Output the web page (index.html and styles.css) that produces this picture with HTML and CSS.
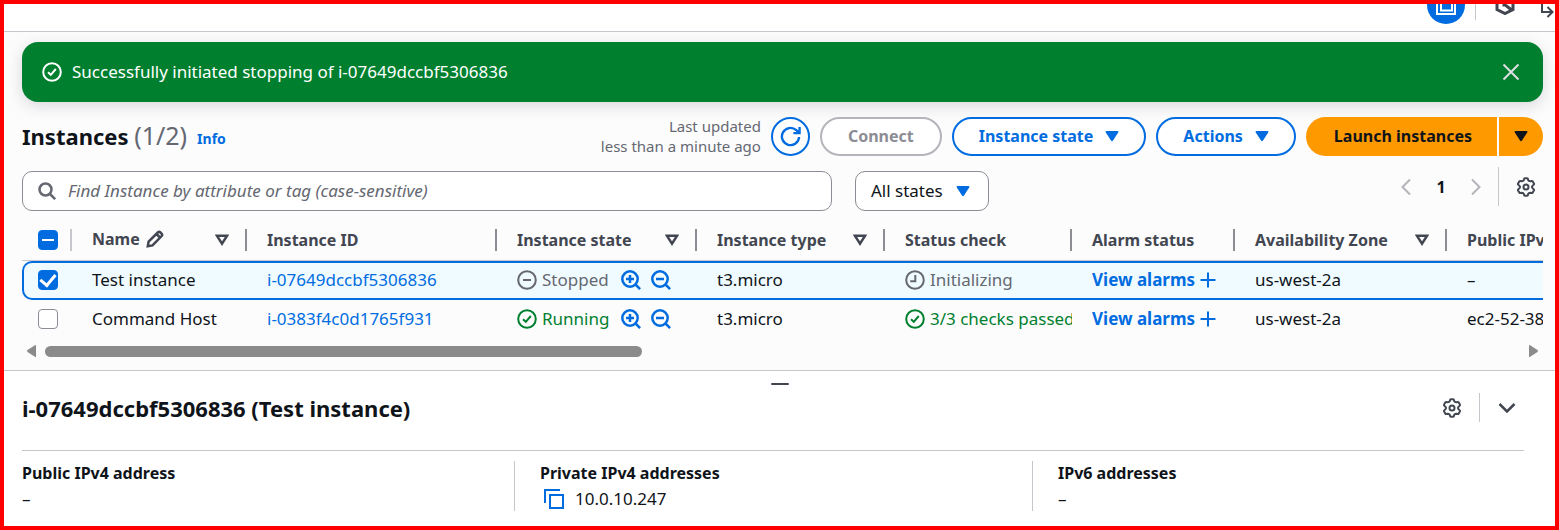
FILE: index.html
```html
<!DOCTYPE html>
<html lang="en">
<head>
<meta charset="utf-8">
<title>Instances</title>
<link rel="stylesheet" href="styles.css">
</head>
<body>
<svg class="sprite" aria-hidden="true">
  <symbol id="ok" viewBox="0 0 20 20"><circle cx="10" cy="10" r="8.8"/><path d="M6 10.200l2.800 2.600 5-5.800"/></symbol>
  <symbol id="stopped" viewBox="0 0 20 20"><circle cx="10" cy="10" r="8.8"/><path d="M6 10h8"/></symbol>
  <symbol id="pending" viewBox="0 0 20 20"><circle cx="10" cy="10" r="8.8"/><path d="M10.3 5v6.2H5.2"/></symbol>
  <symbol id="zoom-in" viewBox="0 0 20 20"><circle cx="9" cy="9" r="7.7"/><path d="M14.5 14.5l4.6 4.6M5 9h8M9 5v8"/></symbol>
  <symbol id="zoom-out" viewBox="0 0 20 20"><circle cx="9" cy="9" r="7.7"/><path d="M14.5 14.5l4.6 4.6M5 9h8"/></symbol>
  <symbol id="plus" viewBox="0 0 16 16"><path d="M8 .5v15M.5 8h15"/></symbol>
  <symbol id="caret" viewBox="0 0 14 12"><path class="solid" d="M1.6 1h10.8a1 1 0 0 1 .8 1.5L8 10.6q-1 1.4-2 0L.8 2.500A1 1 0 0 1 1.600 1z"/></symbol>
  <symbol id="sort" viewBox="0 0 14 12"><path d="M2 1.800h10L7 9.600z"/></symbol>
  <symbol id="gear" viewBox="0 0 20 20"><path d="M8 2.300Q8 1.200 9 1.200h2q1 0 1 1.100.3 1.900 2.300 1.900 1.800-.6 2.300.2l1.300 2q.5.900-.5 1.600-1.500 1.200-1.500 2t1.500 2q1 .7.500 1.600l-1.300 2q-.5.800-2.300.2-2 0-2.300 1.900 0 1.100-1 1.100H9q-1 0-1-1.100-.3-1.900-2.300-1.900-1.800.6-2.300-.2l-1.300-2q-.5-.9.500-1.600 1.500-1.200 1.500-2t-1.500-2q-1-.7-.5-1.600l1.300-2q.5-.8 2.300-.2 2 0 2.300-1.900z"/><circle cx="10" cy="10" r="2.500"/></symbol>
  <symbol id="left" viewBox="0 0 12 18"><path d="M10 1.500L2.500 9l7.500 7.500"/></symbol>
  <symbol id="right" viewBox="0 0 12 18"><path d="M2 1.500L9.500 9 2 16.500"/></symbol>
</svg>
<div class="frame">
  <header class="topbar">
    <button class="round-tool" aria-label="Tools"><svg viewBox="0 0 38 38"><path d="M10 8h18v20H10z"/><path d="M14 8h11v16.500H14z"/></svg></button>
    <span class="topbar-line"></span>
    <button class="tool hex" aria-label="Services"><svg viewBox="0 0 20 20"><path d="M2 5.500L10 1.500l8 4v9l-8 4-8-4zM9 9l7 5.500M9 11.500V8"/></svg></button>
    <button class="tool arrow" aria-label="Open panel"><svg viewBox="0 0 16 16"><path d="M3 0v9h10M8.500 4l5 5-5 5"/></svg></button>
  </header>

  <main class="main">
    <div class="flash" role="status">
      <svg class="icon20"><use href="#ok"/></svg>
      <p class="flash-text">Successfully initiated stopping of i-07649dccbf5306836</p>
      <button class="close" aria-label="Dismiss"><svg viewBox="0 0 18 18"><path d="M1.500 1.500l15 15M16.500 1.500l-15 15"/></svg></button>
    </div>

    <div class="heading-row">
      <h1 class="title">Instances <span class="count">(1/2)</span></h1>
      <a class="info" href="#">Info</a>
      <p class="updated">Last updated<br>less than a minute ago</p>
      <button class="btn refresh" aria-label="Refresh"><svg viewBox="0 0 22 22"><path d="M20 11.500a9 9 0 1 1-3-7.200l3 2.700M20.500 1v6.500H14"/></svg></button>
      <button class="btn connect" disabled>Connect</button>
      <button class="btn">Instance state <svg class="caret"><use href="#caret"/></svg></button>
      <button class="btn">Actions <svg class="caret"><use href="#caret"/></svg></button>
      <div class="split">
        <button class="primary launch">Launch instances</button>
        <button class="primary more" aria-label="More launch options"><svg class="caret"><use href="#caret"/></svg></button>
      </div>
    </div>

    <div class="filter-row">
      <label class="search">
        <svg viewBox="0 0 18 18"><circle cx="7.500" cy="7.500" r="6"/><path d="M12 12l5.200 5.200"/></svg>
        <input type="text" aria-label="Find Instance" placeholder="Find Instance by attribute or tag (case-sensitive)">
      </label>
      <label class="states">
        <select aria-label="Instance states"><option>All states</option></select>
        <svg class="caret"><use href="#caret"/></svg>
      </label>
      <nav class="pager" aria-label="Pages">
        <button class="page-arrow" aria-label="Previous page"><svg><use href="#left"/></svg></button>
        <button class="page">1</button>
        <button class="page-arrow" aria-label="Next page"><svg><use href="#right"/></svg></button>
        <button class="settings" aria-label="Preferences"><svg class="icon20"><use href="#gear"/></svg></button>
      </nav>
    </div>

    <div class="table-wrap">
      <table class="grid">
        <colgroup><col class="c-pick"><col class="c-name"><col class="c-id"><col class="c-state"><col class="c-type"><col class="c-check"><col class="c-alarm"><col class="c-zone"><col class="c-dns"></colgroup>
        <thead>
          <tr>
            <th class="pick"><div class="th pick-head"><input class="tick partial" type="checkbox" aria-label="Select all"></div></th>
            <th><div class="th"><span class="name-label">Name <svg class="pencil" viewBox="0 0 18 18"><path d="M1.800 16.200l.8-4.700L12 2.300q1.200-1 2.500.2l1 1q1.200 1.300.2 2.500L6.500 15.400zM10.500 4l3.500 3.500"/></svg></span><svg class="sort"><use href="#sort"/></svg></div></th>
            <th><div class="th">Instance ID</div></th>
            <th><div class="th">Instance state<svg class="sort"><use href="#sort"/></svg></div></th>
            <th><div class="th">Instance type<svg class="sort"><use href="#sort"/></svg></div></th>
            <th><div class="th">Status check</div></th>
            <th><div class="th">Alarm status</div></th>
            <th><div class="th">Availability Zone<svg class="sort"><use href="#sort"/></svg></div></th>
            <th><div class="th last">Public IPv</div></th>
          </tr>
        </thead>
        <tbody>
          <tr class="selected">
            <td class="pick"><input class="tick" type="checkbox" checked aria-label="Test instance"></td>
            <td>Test instance</td>
            <td><a href="#">i-07649dccbf5306836</a></td>
            <td><div class="cell"><span class="status muted"><svg class="icon20"><use href="#stopped"/></svg>Stopped</span><button class="zoom" aria-label="Include state"><svg class="icon20"><use href="#zoom-in"/></svg></button><button class="zoom" aria-label="Exclude state"><svg class="icon20"><use href="#zoom-out"/></svg></button></div></td>
            <td>t3.micro</td>
            <td><div class="cell"><span class="status muted"><svg class="icon20"><use href="#pending"/></svg>Initializing</span></div></td>
            <td><div class="cell alarm"><a href="#">View alarms</a><button class="zoom" aria-label="Add alarm"><svg class="plus"><use href="#plus"/></svg></button></div></td>
            <td>us-west-2a</td>
            <td>–</td>
          </tr>
          <tr>
            <td class="pick"><input class="tick" type="checkbox" aria-label="Command Host"></td>
            <td>Command Host</td>
            <td><a href="#">i-0383f4c0d1765f931</a></td>
            <td><div class="cell"><span class="status good"><svg class="icon20"><use href="#ok"/></svg>Running</span><button class="zoom" aria-label="Include state"><svg class="icon20"><use href="#zoom-in"/></svg></button><button class="zoom" aria-label="Exclude state"><svg class="icon20"><use href="#zoom-out"/></svg></button></div></td>
            <td>t3.micro</td>
            <td><div class="cell"><span class="status good"><svg class="icon20"><use href="#ok"/></svg>3/3 checks passed</span></div></td>
            <td><div class="cell alarm"><a href="#">View alarms</a><button class="zoom" aria-label="Add alarm"><svg class="plus"><use href="#plus"/></svg></button></div></td>
            <td>us-west-2a</td>
            <td>ec2-52-38</td>
          </tr>
        </tbody>
      </table>
    </div>
    <div class="scroller">
      <button class="scroll-end" aria-label="Scroll left"><svg viewBox="0 0 10 12"><path d="M9 0v12Q8 12 7.500 11.500L.5 7Q-.3 6 .5 5L7.500.5Q8 0 9 0z"/></svg></button>
      <div class="track"><div class="thumb"></div></div>
      <button class="scroll-end" aria-label="Scroll right"><svg viewBox="0 0 10 12"><path d="M1 0v12Q2 12 2.500 11.500L9.500 7Q10.300 6 9.500 5L2.500.5Q2 0 1 0z"/></svg></button>
    </div>
  </main>

  <section class="panel">
    <div class="grip"></div>
    <div class="panel-body">
      <div class="panel-head">
        <h2 class="panel-title">i-07649dccbf5306836 (Test instance)</h2>
        <button class="plain" aria-label="Panel preferences"><svg class="icon20"><use href="#gear"/></svg></button>
        <button class="plain fold" aria-label="Collapse panel"><svg viewBox="0 0 18 12"><path d="M1.500 2L9 9.500 16.500 2"/></svg></button>
      </div>
      <dl class="facts">
        <div class="fact"><dt>Public IPv4 address</dt><dd>–</dd></div>
        <div class="fact"><dt>Private IPv4 addresses</dt><dd class="copyable"><button class="copy" aria-label="Copy address"><svg viewBox="0 0 20 20"><path d="M1 14V1h15M6 6h13v13H6z"/></svg></button>10.0.10.247</dd></div>
        <div class="fact"><dt>IPv6 addresses</dt><dd>–</dd></div>
      </dl>
    </div>
  </section>
</div>
</body>
</html>
```
FILE: styles.css
```css
* { box-sizing: border-box; }
body { margin: 0; font-family: "Noto Sans", "Open Sans", sans-serif; font-size: 17px; line-height: 24px; color: #0f141a; }
h1, h2, p, dl, dd { margin: 0; }
button, input, select { font: inherit; color: inherit; }
button { padding: 0; border: 0; background: none; flex: none; display: inline-flex; align-items: center; justify-content: center; }
a { color: #006ce0; text-decoration: none; }
svg { fill: none; stroke: currentColor; stroke-width: 2; display: block; flex: none; }
.solid { fill: currentColor; stroke: none; }
.sprite { display: none; }
.icon20 { width: 20px; height: 20px; }
.caret, .sort { width: 14px; height: 12px; }

.frame { min-height: 100vh; border: 4px solid #f00; background: #fcfcfd; display: flex; flex-direction: column; overflow: hidden; }

.topbar { height: 28px; background: #fff; border-bottom: 1px solid #c6c6cd; display: flex; justify-content: flex-end; align-items: flex-end; overflow: hidden; color: #424650; }
.round-tool { width: 38px; height: 38px; border-radius: 50%; background: #006ce0; color: #fff; margin-bottom: 7px; }
.round-tool svg { width: 38px; height: 38px; margin-top: -20px; }
.round-tool { align-items: flex-start; }
.round-tool svg { margin-top: 0; }
.topbar-line { width: 1px; height: 20px; background: #c6c6cd; margin: 0 19px 11px 10px; }
.tool svg { width: 20px; height: 20px; stroke-width: 3; }
.hex { margin-bottom: 16px; }
.arrow { margin: 0 0 12px 24px; }
.tool.arrow svg { width: 16px; height: 16px; stroke-width: 2; }

.main { padding: 10px 12px 13px 18px; }
.flash { display: flex; align-items: center; gap: 10px; height: 60px; padding: 0 23px 0 20px; border-radius: 16px; background: #00802f; color: #fff; box-shadow: 0 4px 16px #00071626; }
.flash-text { flex: 1; }
.close { color: #dedee3; }
.close svg { width: 18px; height: 18px; }

.heading-row { display: flex; align-items: center; gap: 10px; margin-top: 14px; }
.title { font-size: 22px; line-height: 32px; font-weight: 700; white-space: nowrap; padding-bottom: 2px; }
.count { font-size: 25px; font-weight: 400; color: #656871; }
.info { font-size: 14px; font-weight: 700; padding-top: 6px; flex: 1; }
.updated { font-size: 15px; line-height: 20px; color: #656871; text-align: right; }
.btn { height: 39px; padding: 0 25px; gap: 12px; border: 2px solid #006ce0; border-radius: 20px; background: #fff; color: #006ce0; font-size: 16px; font-weight: 700; white-space: nowrap; }
.refresh { width: 39px; padding: 0; }
.refresh svg { width: 21px; height: 21px; stroke-width: 2.500; }
.connect { padding: 0 26px; border-color: #b4b4bb; color: #8c8c94; }
.split { display: flex; gap: 2px; }
.primary { height: 39px; background: #ff9900; font-size: 16px; font-weight: 700; white-space: nowrap; }
.launch { padding: 0 25px 0 28px; border-radius: 20px 0 0 20px; }
.more { width: 44px; border-radius: 0 20px 20px 0; }

.filter-row { display: flex; align-items: center; margin-top: 11px; }
.search { flex: 0 1 810px; height: 40px; display: flex; align-items: center; gap: 12px; padding: 0 15px; background: #fff; border: 1px solid #8c8c94; border-radius: 10px; color: #656871; }
.search svg { width: 18px; height: 18px; stroke-width: 2.500; }
.search input { flex: 1; border: 0; outline: 0; padding: 0; background: none; }
.search input::placeholder { color: #656871; font-style: italic; opacity: 1; }
.states { position: relative; margin-left: 23px; }
.states select { appearance: none; width: 134px; height: 40px; padding: 0 15px; background: #fff; border: 1px solid #8c8c94; border-radius: 10px; }
.states .caret { position: absolute; right: 19px; top: 14px; color: #006ce0; pointer-events: none; }
.pager { margin-left: auto; display: flex; align-items: center; color: #424650; padding-bottom: 8px; }
.page-arrow { color: #b4b4bb; }
.page-arrow svg { width: 12px; height: 18px; }
.page { width: 58px; font-size: 16px; font-weight: 700; color: #0f141a; }
.settings { height: 39px; border-left: 1px solid #c6c6cd; margin-left: 16px; padding: 0 7px 0 17px; }

.table-wrap { overflow: hidden; margin-top: 6px; }
.grid { width: 1624px; table-layout: fixed; border-collapse: separate; border-spacing: 0; }
.c-pick { width: 50px; }
.c-name { width: 175px; }
.c-id { width: 250px; }
.c-state { width: 200px; }
.c-type { width: 188px; }
.c-check { width: 187px; }
.c-alarm { width: 163px; }
.c-zone { width: 212px; }
th { padding: 0; height: 41px; border-bottom: 1px solid #c6c6cd; color: #424650; font-size: 16px; text-align: left; }
.th { height: 22px; display: flex; align-items: center; justify-content: space-between; padding: 0 16px 0 20px; border-right: 2px solid #8c8c94; white-space: nowrap; }
.th.pick-head { padding: 0 0 0 16px; border-color: #c6c6cd; }
.th.last { border: 0; }
.name-label { display: flex; align-items: center; gap: 6px; padding-bottom: 2px; }
.pencil { width: 18px; height: 18px; stroke-width: 2.500; }
.sort { stroke-width: 2.500; }
td { height: 39px; padding: 0 0 2px 20px; white-space: nowrap; overflow: hidden; border: 0 solid #006ce0; }
td.pick, th.pick { padding-left: 0; }
td.pick { padding-left: 16px; }
.selected td { background: #f0fbff; border-width: 2px 0; }
.selected td.pick { border-left-width: 2px; border-radius: 10px 0 0 10px; padding-left: 14px; }
.tick { appearance: none; display: grid; place-items: center; width: 20px; height: 20px; margin: 0; border: 1px solid #8c8c94; border-radius: 4px; background: #fff; }
.tick.partial, .tick:checked { background: #006ce0; border-color: #006ce0; }
.tick.partial::before { content: ""; width: 12px; height: 2px; background: #fff; }
.tick:checked::before { content: ""; width: 7px; height: 12px; margin-bottom: 3px; border: solid #fff; border-width: 0 3px 3px 0; transform: rotate(40deg); }
.cell { display: flex; align-items: center; }
.status { display: flex; align-items: center; gap: 5px; margin-right: 2px; }
.muted { color: #656871; }
.good { color: #00802f; }
.zoom { color: #006ce0; margin-left: 10px; }
.zoom .icon20 { stroke-width: 2.500; }
.alarm { font-weight: 700; }
.alarm .zoom { margin-left: 5px; }
.plus { width: 16px; height: 16px; }

.scroller { display: flex; align-items: center; height: 12px; margin: 6px 5px 0; gap: 8px; }
.scroll-end svg { width: 10px; height: 12px; fill: #8b8b8b; stroke: none; }
.track { flex: 1; }
.thumb { width: 40.5%; height: 11px; border-radius: 6px; background: #8b8b8b; }

.panel { flex: 1; background: #fff; border-top: 1px solid #c6c6cd; padding: 12px 0 15px; }
.panel-body { padding: 0 31px 0 18px; }
.grip { width: 18px; height: 2px; margin: 0 auto; background: #424650; border-radius: 1px; }
.panel-head { display: flex; align-items: center; height: 66px; padding-bottom: 20px; border-bottom: 1px solid #c6c6cd; color: #424650; }
.panel-title { flex: 1; font-size: 22px; line-height: 28px; color: #0f141a; }
.fold { height: 29px; margin-left: 17px; padding: 0 8px 0 18px; border-left: 1px solid #c6c6cd; }
.fold svg { width: 18px; height: 12px; stroke-width: 2.500; }
.facts { display: grid; grid-template-columns: 492fr 518fr 492fr; padding-top: 10px; }
.fact + .fact { border-left: 1px solid #c6c6cd; padding-left: 25px; }
dt { font-size: 16px; font-weight: 700; line-height: 25px; }
dd { line-height: 25px; }
.copyable { display: flex; align-items: center; gap: 11px; padding-left: 4px; }
.copy { color: #006ce0; }
.copy svg { width: 20px; height: 20px; }
```
